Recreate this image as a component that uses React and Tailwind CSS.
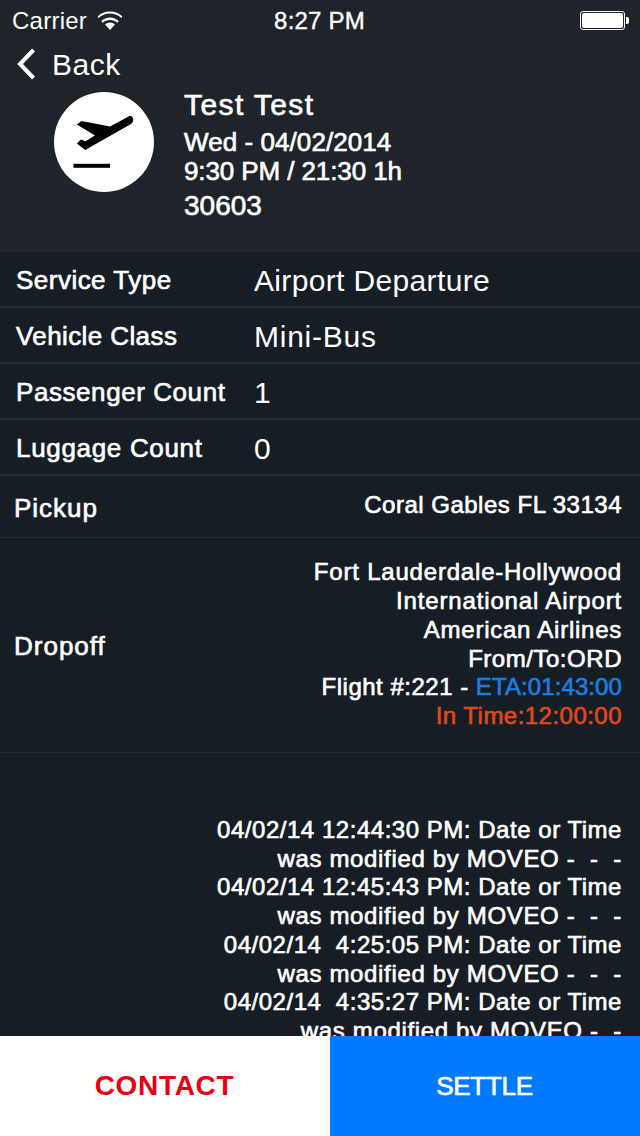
const medium = "[-webkit-text-stroke:0.65px_white]";
const labelText = `text-[26px] ${medium}`;

const details = [
    { label: "Service Type", labelTrack: "tracking-[0.48px]", value: "Airport Departure", valueTrack: "tracking-[0.35px]" },
    { label: "Vehicle Class", labelTrack: "tracking-[0.4px]", value: "Mini-Bus", valueTrack: "tracking-[0.75px]" },
    { label: "Passenger Count", labelTrack: "tracking-[0.57px]", value: "1", valueTrack: "" },
    { label: "Luggage Count", labelTrack: "tracking-[0.68px]", value: "0", valueTrack: "" },
];

const dateTrack = "tracking-[0.53px]";
const byTrack = "tracking-[0.66px]";

const logLines = [
    { text: "04/02/14 12:44:30 PM: Date or Time", track: dateTrack },
    { text: "was modified by MOVEO -  -  -", track: byTrack },
    { text: "04/02/14 12:45:43 PM: Date or Time", track: dateTrack },
    { text: "was modified by MOVEO -  -  -", track: byTrack },
    { text: "04/02/14  4:25:05 PM: Date or Time", track: dateTrack },
    { text: "was modified by MOVEO -  -  -", track: byTrack },
    { text: "04/02/14  4:35:27 PM: Date or Time", track: dateTrack },
    { text: "was modified by MOVEO -  -", track: byTrack },
];

const Wifi = () => (
    <svg width="26" height="20" viewBox="0 0 26 20" fill="white">
        <path d="M13 2.5C8.6 2.5 4.7 4.2 1.8 7L0.6 5.4C3.9 2.3 8.2.5 13 .5s9.1 1.8 12.4 4.9L24.2 7C21.3 4.2 17.4 2.5 13 2.5z" />
        <path d="M13 6.5c-3.4 0-6.4 1.3-8.7 3.5l1.5 1.8C7.7 10 10.2 9 13 9s5.3 1 7.2 2.8l1.5-1.8C19.4 7.8 16.4 6.5 13 6.5z" />
        <path d="M13 11.5c-2 0-3.7.8-5 2l5 5.6 5-5.6c-1.3-1.2-3-2-5-2z" />
    </svg>
);

const Battery = () => (
    <div className="flex items-center">
        <div className="w-[45px] h-[19px] rounded-[3px] border border-white p-px">
            <div className="w-full h-full rounded-[2px] bg-white" />
        </div>
        <div className="w-[3px] h-[7px] ml-px rounded-r-[2px] bg-white" />
    </div>
);

const DepartureIcon = () => (
    <div className="w-[100px] h-[100px] mt-[5px] rounded-full bg-white shrink-0">
        <svg width="100" height="100" viewBox="0 0 100 100">
            <path
                d="M75 24.2 L56 34.5 L27.5 29 L22.8 32.6 L41 43.5 L31.5 49.3 L27 47.4 L22.8 51.5 L31.2 58 L77 32 C80.5 30 80 23 75 24.2 Z"
                fill="black"
            />
            <rect x="19.5" y="71.8" width="36.5" height="4" fill="black" />
        </svg>
    </div>
);

const App = () => {
    return (
        <div className="w-[640px] h-[1136px] flex flex-col overflow-hidden bg-[#161d24] text-white font-['Liberation_Sans',sans-serif]">
            <header className="h-[252px] shrink-0 bg-[#1f242b]">
                <div className="h-[41px] flex items-center justify-between pl-[12px] pr-[11px]">
                    <div className="flex-1 flex items-center gap-[10px]">
                        <span className="text-[24px] tracking-[0.25px]">Carrier</span>
                        <Wifi />
                    </div>
                    <span className="mr-[2px] text-[24px] tracking-[0.2px] [-webkit-text-stroke:0.4px_white]">8:27 PM</span>
                    <div className="flex-1 flex justify-end">
                        <Battery />
                    </div>
                </div>
                <div className="h-[46px] flex items-center pl-[16px] gap-[15px]">
                    <svg width="21" height="32" viewBox="0 0 21 32" fill="none">
                        <path d="M17.5 2 L4 16 L17.5 30" stroke="white" strokeWidth="4" />
                    </svg>
                    <span className="text-[30px] tracking-[0.5px]">Back</span>
                </div>
                <div className="flex items-start pl-[54px] gap-[30px]">
                    <DepartureIcon />
                    <div className="flex flex-col">
                        <div className={`text-[30px] leading-[36px] tracking-[1.4px] ${medium}`}>Test Test</div>
                        <div className={`text-[26px] leading-[29px] mt-[5px] tracking-[0.07px] ${medium}`}>Wed - 04/02/2014</div>
                        <div className={`text-[26px] leading-[29px] tracking-[-0.1px] ${medium}`}>9:30 PM / 21:30 1h</div>
                        <div className={`text-[28px] leading-[34px] mt-[3px] ${medium}`}>30603</div>
                    </div>
                </div>
            </header>

            <main className="flex-1 min-h-0 overflow-hidden">
                {details.map((row) => (
                    <div key={row.label} className="h-14 flex items-center pl-[16px] pt-[2px] border-b-2 border-[#262c33]">
                        <div className={`w-[238px] shrink-0 ${labelText} ${row.labelTrack}`}>{row.label}</div>
                        <div className={`text-[30px] ${row.valueTrack}`}>{row.value}</div>
                    </div>
                ))}

                <div className="h-[62px] flex items-center justify-between pl-[14px] pr-[18px] pt-[3px] border-b border-[#262c33]">
                    <span className={`${labelText} tracking-[1px]`}>Pickup</span>
                    <span className={`mb-[6px] text-[24px] tracking-[0.5px] ${medium}`}>Coral Gables FL 33134</span>
                </div>

                <div className="h-[215px] flex items-center justify-between pl-[14px] pr-[18px] border-b border-[#262c33]">
                    <span className={`mt-[2px] ${labelText} tracking-[1px]`}>Dropoff</span>
                    <div className="mb-[1px] text-right text-[24px] leading-[28.8px] [-webkit-text-stroke:0.65px]">
                        <div className="tracking-[0.8px]">Fort Lauderdale-Hollywood</div>
                        <div className="tracking-[0.85px]">International Airport</div>
                        <div className="tracking-[0.75px]">American Airlines</div>
                        <div className="tracking-[0.53px]">From/To:ORD</div>
                        <div className="tracking-[0.5px]">
                            Flight #:221 - <span className="text-[#1a7fe0] tracking-[0.1px]">ETA:01:43:00</span>
                        </div>
                        <div className="text-[#e0491a] tracking-[0.47px]">In Time:12:00:00</div>
                    </div>
                </div>

                <div className="pt-[63px] pr-[18px] text-right text-[24px] leading-[28.7px] whitespace-pre [-webkit-text-stroke:0.65px]">
                    {logLines.map((line, i) => (
                        <div key={i} className={line.track}>{line.text}</div>
                    ))}
                </div>
            </main>

            <footer className="h-[100px] shrink-0 flex">
                <button className="w-[330px] bg-white text-[#e60012] text-[28px] font-bold tracking-[0.7px] pr-[1px]">
                    CONTACT
                </button>
                <button className={`flex-1 bg-[#007aff] text-white text-[26px] tracking-[-0.3px] pr-[1px] ${medium}`}>SETTLE</button>
            </footer>
        </div>
    );
};

export default App;
